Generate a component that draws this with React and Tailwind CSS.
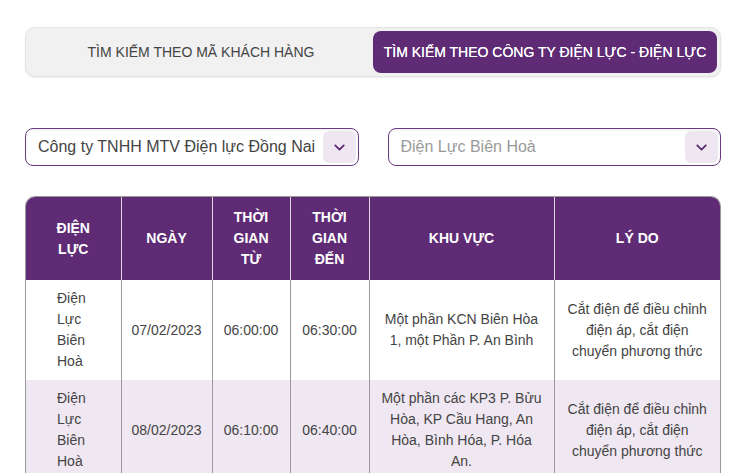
import { ChevronDown } from "lucide-react";

const rows = [
  {
    dl: "Điện Lực Biên Hoà",
    ngay: "07/02/2023",
    tu: "06:00:00",
    den: "06:30:00",
    khuVuc: "Một phần KCN Biên Hòa 1, một Phần P. An Bình",
    lyDo: "Cắt điện để điều chỉnh điện áp, cắt điện chuyển phương thức",
  },
  {
    dl: "Điện Lực Biên Hoà",
    ngay: "08/02/2023",
    tu: "06:10:00",
    den: "06:40:00",
    khuVuc: "Một phần các KP3 P. Bửu Hòa, KP Cầu Hang, An Hòa, Bình Hóa, P. Hóa An.",
    lyDo: "Cắt điện để điều chỉnh điện áp, cắt điện chuyển phương thức",
  },
];

function SelectBox({ value, placeholder }) {
  return (
    <div className="h-[38px] rounded-[8px] border border-[#6b3b82] bg-white flex items-center pl-[12px] pr-[2px] shadow-[inset_0_1px_3px_rgba(0,0,0,0.08)]">
      <span
        className={`flex-1 text-[16px] truncate ${
          placeholder ? "text-[#9a9a9a]" : "text-[#444]"
        }`}
      >
        {value}
      </span>
      <div className="w-[33px] h-[32px] rounded-[6px] bg-[#eee7f1] flex items-center justify-center">
        <ChevronDown size={17} strokeWidth={2.6} className="text-[#5e2b74]" />
      </div>
    </div>
  );
}

function App() {
  return (
    <div className="min-h-screen bg-white pt-[27px] pl-[25px] pr-[16px] font-['Liberation_Sans',Arial,sans-serif]">
      <div className="h-[50px] rounded-[10px] bg-[#f1f1f1] border border-[#e4e4e4] shadow-[0_1px_2px_rgba(0,0,0,0.08)] p-[3px] flex">
        <div className="flex-1 flex items-center justify-center text-[14px] text-[#444]">
          TÌM KIẾM THEO MÃ KHÁCH HÀNG
        </div>
        <div className="flex-1 rounded-[8px] bg-[#5e2b74] flex items-center justify-center text-[14px] text-white [text-shadow:0_0_0.4px_#fff]">
          TÌM KIẾM THEO CÔNG TY ĐIỆN LỰC - ĐIỆN LỰC
        </div>
      </div>

      <div className="mt-[51px] grid grid-cols-2 gap-[29px]">
        <SelectBox value="Công ty TNHH MTV Điện lực Đồng Nai" />
        <SelectBox value="Điện Lực Biên Hoà" placeholder />
      </div>

      <div className="mt-[30px] rounded-t-[10px] overflow-hidden border border-[#9a9a9a] border-b-0">
        <table className="w-full table-fixed border-collapse text-[14px] leading-[21px]">
          <colgroup>
            <col className="w-[95px]" />
            <col className="w-[91px]" />
            <col className="w-[78px]" />
            <col className="w-[79px]" />
            <col className="w-[185px]" />
            <col />
          </colgroup>
          <thead>
            <tr className="bg-[#5e2b74] text-white font-bold h-[83px]">
              <th className="px-[27px] border-r border-white/80">ĐIỆN LỰC</th>
              <th className="px-[10px] border-r border-white/80">NGÀY</th>
              <th className="px-[14px] border-r border-white/80">THỜI GIAN TỪ</th>
              <th className="px-[14px] border-r border-white/80">THỜI GIAN ĐẾN</th>
              <th className="px-[10px] border-r border-white/80">KHU VỰC</th>
              <th className="px-[10px]">LÝ DO</th>
            </tr>
          </thead>
          <tbody className="text-[#444]">
            {rows.map((r, i) => (
              <tr key={i} className={i % 2 ? "bg-[#efe7f1]" : "bg-white"}>
                <td className="pl-[31px] pr-[26px] py-[8px] text-left border-r border-[#9a9a9a]">
                  {r.dl}
                </td>
                <td className="px-[8px] text-center border-r border-[#9a9a9a]">{r.ngay}</td>
                <td className="px-[8px] text-center border-r border-[#9a9a9a]">{r.tu}</td>
                <td className="px-[8px] text-center border-r border-[#9a9a9a]">{r.den}</td>
                <td className="px-[10px] py-[8px] text-center border-r border-[#9a9a9a]">
                  {r.khuVuc}
                </td>
                <td className="px-[10px] py-[8px] text-center">{r.lyDo}</td>
              </tr>
            ))}
          </tbody>
        </table>
      </div>
    </div>
  );
}

export default App;
